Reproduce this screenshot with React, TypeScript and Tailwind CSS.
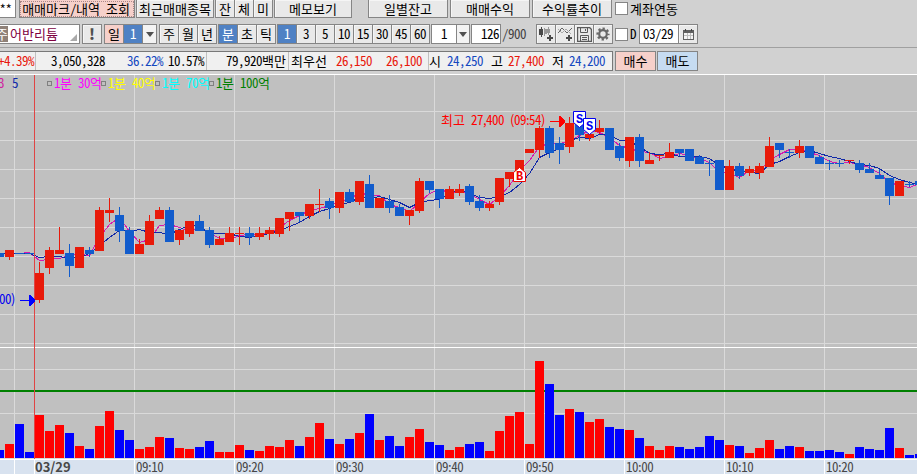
import type { ReactNode } from "react";

type Candle = [x: number, color: "r" | "b", top: number, bottom: number, high: number, low: number, volTop: number];

const candles: Candle[] = [
  [-5, "b", 253, 257, 253, 257, 450], [5, "r", 250, 257, 250, 260, 444], [15, "b", 253, 254, 253, 254, 424],
  [25, "b", 253, 254, 253, 254, 452], [35, "r", 273, 300, 262, 303, 415], [45, "r", 250, 268, 247, 274, 431],
  [55, "r", 250, 254, 227, 254, 425], [65, "b", 253, 266, 244, 277, 433], [75, "r", 247, 268, 247, 268, 446],
  [85, "b", 250, 254, 247, 257, 449], [95, "r", 210, 251, 207, 251, 426], [105, "r", 210, 213, 198, 222, 411],
  [115, "b", 215, 231, 207, 242, 430], [125, "b", 230, 254, 227, 254, 440], [135, "r", 244, 254, 239, 254, 449],
  [145, "r", 221, 245, 215, 245, 447], [155, "r", 210, 219, 207, 219, 437], [165, "b", 210, 242, 207, 242, 438],
  [175, "r", 230, 240, 230, 245, 448], [185, "r", 221, 234, 221, 237, 449], [195, "b", 221, 231, 215, 231, 447],
  [205, "b", 230, 245, 227, 248, 441], [215, "r", 239, 245, 236, 245, 452], [225, "r", 233, 242, 227, 242, 452],
  [235, "r", 233, 234, 227, 245, 445], [245, "b", 233, 237, 227, 245, 450], [255, "r", 233, 237, 227, 240, 451],
  [265, "r", 230, 234, 227, 240, 446], [275, "r", 218, 234, 218, 237, 447], [285, "r", 212, 219, 212, 231, 440],
  [295, "b", 212, 216, 212, 222, 446], [305, "r", 204, 216, 204, 219, 437], [315, "r", 204, 205, 189, 212, 423],
  [325, "b", 201, 208, 198, 219, 439], [335, "r", 192, 208, 192, 213, 444], [345, "b", 192, 202, 189, 202, 439],
  [355, "r", 181, 202, 181, 205, 433], [365, "b", 184, 208, 175, 208, 414], [375, "r", 198, 208, 198, 208, 440],
  [385, "b", 201, 208, 195, 213, 436], [395, "b", 207, 216, 204, 216, 446], [405, "r", 210, 216, 210, 225, 437],
  [415, "r", 181, 211, 178, 213, 429], [425, "b", 181, 190, 181, 193, 442], [435, "b", 189, 199, 189, 208, 445],
  [445, "r", 189, 199, 186, 199, 450], [455, "r", 189, 193, 184, 196, 447], [465, "b", 186, 202, 184, 205, 444],
  [475, "b", 201, 208, 195, 211, 442], [485, "r", 204, 208, 201, 211, 451], [495, "r", 178, 202, 178, 205, 431],
  [505, "r", 172, 179, 172, 187, 416], [515, "r", 160, 173, 160, 173, 412], [525, "r", 149, 153, 149, 153, 444],
  [535, "r", 128, 150, 126, 158, 361], [545, "b", 128, 153, 126, 158, 384], [555, "b", 143, 150, 137, 164, 415],
  [565, "r", 123, 147, 117, 153, 409], [575, "b", 118, 135, 118, 141, 412], [585, "r", 134, 138, 134, 141, 422],
  [595, "r", 128, 132, 120, 134, 419], [605, "b", 128, 150, 128, 150, 427], [615, "b", 146, 158, 143, 161, 429],
  [625, "r", 137, 161, 137, 167, 430], [635, "b", 137, 161, 134, 167, 438], [645, "r", 160, 164, 152, 164, 446],
  [655, "r", 155, 156, 155, 161, 450], [665, "r", 152, 158, 143, 158, 446], [675, "b", 149, 153, 149, 156, 447],
  [685, "b", 149, 161, 149, 161, 449], [695, "b", 157, 164, 155, 164, 447], [705, "b", 163, 164, 160, 176, 436],
  [715, "b", 160, 190, 160, 190, 440], [725, "r", 166, 190, 160, 190, 445], [735, "b", 166, 176, 163, 179, 446],
  [745, "r", 169, 173, 166, 176, 453], [755, "r", 166, 173, 163, 179, 448], [765, "r", 146, 167, 137, 167, 440],
  [775, "b", 143, 150, 143, 158, 449], [785, "b", 152, 153, 149, 158, 446], [795, "r", 146, 153, 140, 158, 447],
  [805, "b", 146, 158, 146, 158, 451], [815, "b", 157, 164, 155, 164, 451], [825, "b", 163, 164, 160, 170, 450],
  [835, "b", 163, 164, 160, 167, 452], [845, "r", 160, 161, 160, 164, 454], [855, "b", 163, 170, 160, 173, 447],
  [865, "b", 169, 173, 163, 173, 449], [875, "b", 175, 179, 169, 179, 450], [885, "b", 178, 196, 178, 205, 428],
  [895, "r", 181, 196, 181, 196, 448], [905, "b", 184, 185, 181, 187, 455], [915, "b", 181, 185, 181, 185, 454],
];

const closes = candles.map(([, c, top, bottom]) => (c === "r" ? top : bottom - 1));

function average(period: number) {
  return candles
    .map(([x], i) => {
      let sum = 0;
      for (let k = 0; k < period; k++) sum += i - k < 0 ? 253 : closes[i - k];
      return `${x + 4.5},${Math.round(sum / period) + 0.5}`;
    })
    .join(" ");
}

const columns = [14, 134, 234, 334, 434, 524, 624, 724, 824];
const priceRows = [111, 140, 169, 198, 227, 256, 285, 314, 343, 369, 413];

/* Half-width Latin cells of 6px beside 12px Hangul cells; "narrow" gives punctuation its own width. */
function T({ children, className = "", narrow = false }: { children: string; className?: string; narrow?: boolean }) {
  const runs = children.match(narrow ? /[가-힣]+|[,:()]+|[^가-힣,:()]+/g : /[가-힣]+|[^가-힣]+/g) ?? [];
  return (
    <span className={`whitespace-pre ${className}`}>
      {runs.map((run, i) => {
        if (/[가-힣]/.test(run)) return <span key={i}>{run}</span>;
        if (narrow && /[,:()]/.test(run)) return <span key={i} className="tracking-[-0.5px]">{run}</span>;
        return <span key={i} className="tracking-[-0.5px] [font-feature-settings:'hwid']">{run}</span>;
      })}
    </span>
  );
}

function Cell({ children, className = "" }: { children?: ReactNode; className?: string }) {
  return (
    <div className={`box-border flex shrink-0 items-center justify-center border border-[#858585] ${className}`}>
      {children}
    </div>
  );
}

const face = "bg-[#e9e9e9] shadow-[inset_1px_1px_0_#f5f5f5]";

function Segments({
  items,
  active,
  className = "",
  cell = "h-5",
}: {
  items: string[];
  active?: number;
  className?: string;
  cell?: string;
}) {
  return (
    <div className={`flex shrink-0 ${className}`}>
      {items.map((item, i) => (
        <Cell key={item} className={`w-5 not-first:-ml-px ${cell} ${i === active ? "bg-[#4f81c4] text-white" : face}`}>
          <T>{item}</T>
        </Cell>
      ))}
    </div>
  );
}

function Caret() {
  return (
    <svg width="8" height="5" viewBox="0 0 8 5" className="shrink-0">
      <path d="M0 0h8L4 5z" fill="#505050" />
    </svg>
  );
}

function Check({ className = "" }: { className?: string }) {
  return <div className={`size-[13px] shrink-0 border border-[#858585] bg-white ${className}`} />;
}

function CandleIcon() {
  return (
    <svg width="16" height="16" viewBox="0 0 16 16" shapeRendering="crispEdges">
      <path d="M3 1h1v10H3zM1 3h4v6H1z" fill="#484848" />
      <path d="M6 2h1v8H6zM7 3h2v5H7zM10 1h1v8h-1zM9 3h3v4H9z" fill="#989898" />
      <path d="M11 9h2v2h2v2h-2v2h-2v-2H9v-2h2z" fill="#484848" />
    </svg>
  );
}

function TrendIcon() {
  return (
    <svg width="16" height="16" viewBox="0 0 16 16" shapeRendering="crispEdges">
      <path d="M1 7l4-5 5 5 5-5" fill="none" stroke="#666" />
      <path d="M1 3l4 4 4-4 5 5" fill="none" stroke="#aaa" />
      <path d="M11 9h2v2h2v2h-2v2h-2v-2H9v-2h2z" fill="#484848" />
    </svg>
  );
}

function SaveIcon() {
  return (
    <svg width="15" height="15" viewBox="0 0 15 15" fill="none" stroke="#5a5a5a">
      <path d="M.5.5h12l2 2v12H.5z" strokeWidth="1.4" />
      <path d="M3.5.5v5h7v-5M8.500 2v2M3.500 14v-5.500h8V14M5 10.500h5M5 12.500h5" />
    </svg>
  );
}

function GearIcon() {
  return (
    <svg width="14" height="14" viewBox="0 0 14 14" fill="none" stroke="#686868">
      <circle cx="7" cy="7" r="3.800" strokeWidth="2.200" />
      <circle cx="7" cy="7" r="5.500" strokeWidth="2.200" strokeDasharray="2.300 2.020" strokeDashoffset="1.150" />
    </svg>
  );
}

function CalendarIcon() {
  return (
    <svg width="11" height="11" viewBox="0 0 11 11" shapeRendering="crispEdges">
      <path d="M0 1h11v10H0z" fill="#606060" />
      <path d="M1 4h9v6H1z" fill="#f4f4f4" />
      <path d="M4 4h1v6H4zM7 4h1v6H7zM1 6h9v1H1z" fill="#bcbcbc" />
      <path d="M2 0h1v2H2zM8 0h1v2H8z" fill="#404040" />
    </svg>
  );
}

function MenuRow() {
  return (
    <div className="flex h-[18px] shrink-0 items-start">
      <Cell className="h-[18px] w-4 border-t-0 border-l-0 bg-white"><T className="mr-1">**</T></Cell>
      <Cell className="ml-[3px] h-[18px] w-[116px] border-t-0 bg-[#f6d0ca] outline-1 -outline-offset-2 outline-dotted outline-[#a88]">
        <T className="-ml-0.5">매매마크/내역 조회</T>
      </Cell>
      <Cell className={`ml-px h-[18px] w-[78px] border-t-0 ${face}`}><T>최근매매종목</T></Cell>
      <Segments items={["잔", "체", "미"]} cell="h-[18px] border-t-0" className="ml-px" />
      <Cell className={`ml-px h-[18px] w-[78px] border-t-0 ${face}`}><T>메모보기</T></Cell>
      <Cell className={`ml-4 h-[18px] w-20 border-t-0 ${face}`}><T>일별잔고</T></Cell>
      <Cell className={`ml-0.5 h-[18px] w-20 border-t-0 ${face}`}><T>매매수익</T></Cell>
      <Cell className={`ml-0.5 h-[18px] w-20 border-t-0 ${face}`}><T>수익률추이</T></Cell>
      <Check className="mt-0.5 ml-[3px]" />
      <T className="ml-0.5">계좌연동</T>
    </div>
  );
}

function ToolRow() {
  return (
    <div className="mt-1.5 flex h-5 shrink-0 items-center">
      <div className="relative flex h-5 w-20 shrink-0 items-center border border-l-0 border-[#858585] bg-white">
        <div className="flex h-4 w-2 shrink-0 items-center justify-end bg-[#8f8178] text-white"><T>주</T></div>
        <T className="ml-0.5 text-[#800040]">어반리튬</T>
        <svg className="absolute right-0.5 bottom-0.5" width="7" height="7"><path d="M7 0v7H0z" fill="#aaa" /></svg>
      </div>
      <Cell className={`ml-0.5 h-5 w-5 text-[15px] font-black text-[#505050] ${face}`}>!</Cell>
      <Cell className="ml-0.5 h-5 w-5 bg-[#f6d0ca]"><T>일</T></Cell>
      <Cell className="-ml-px h-5 w-5 bg-[#4f81c4] text-white"><T>1</T></Cell>
      <Cell className="-ml-px h-5 w-[15px] bg-[#f3f3f3]"><Caret /></Cell>
      <Segments items={["주", "월", "년"]} className="ml-0.5" />
      <Segments items={["분", "초", "틱"]} active={0} className="ml-px" />
      <Segments items={["1", "3", "5", "10", "15", "30", "45", "60"]} active={0} className="ml-px" />
      <Cell className="ml-px h-5 w-[26px] bg-white"><T>1</T></Cell>
      <Cell className="-ml-px h-5 w-[14px] bg-[#f3f3f3]"><Caret /></Cell>
      <Cell className="ml-px h-5 w-[30px] justify-end bg-white pr-px"><T>126</T></Cell>
      <T className="ml-px w-[34px] text-[#404040]">/900</T>
      <Cell className={`h-5 w-5 ${face}`}><CandleIcon /></Cell>
      <Cell className={`-ml-px h-5 w-5 ${face}`}><TrendIcon /></Cell>
      <Cell className={`-ml-px h-5 w-5 ${face}`}><SaveIcon /></Cell>
      <Cell className={`-ml-px h-5 w-5 ${face}`}><GearIcon /></Cell>
      <Check className="ml-0.5" />
      <T className="ml-[2px] w-[9px]">D</T>
      <Cell className="h-5 w-10 justify-start bg-white pl-[3px]"><T>03/29</T></Cell>
      <Cell className={`-ml-px h-5 w-5 ${face}`}><CalendarIcon /></Cell>
    </div>
  );
}

const red = "text-[#e8180c]";
const blue = "text-[#1448c0]";

function QuoteRow() {
  return (
    <div className="mt-[3px] flex h-5 shrink-0">
      <div className="flex h-5 w-[613px] shrink-0 items-center border border-l-0 border-[#787878] bg-[#f0f0f0]">
        <div className={`flex h-full w-9 shrink-0 justify-end border-r border-[#c0c0c0] pr-px ${red}`}><T>+4.39%</T></div>
        <div className="flex h-full w-[171px] shrink-0 border-r border-[#c0c0c0]">
          <T className="ml-[15px] w-[76px]">3,050,328</T>
          <T className={`w-[41px] ${blue}`}>36.22%</T>
          <T>10.57%</T>
        </div>
        <div className="flex h-full w-[82px] shrink-0 justify-end border-r border-[#c0c0c0] pr-0.5"><T>79,920백만</T></div>
        <div className="flex h-full w-[140px] shrink-0 border-r border-[#c0c0c0]">
          <T className="ml-0.5 w-[45px]">최우선</T>
          <T className={`w-[50px] ${red}`}>26,150</T>
          <T className={red}>26,100</T>
        </div>
        <T className="w-[18px]">시</T>
        <T className={`w-11 ${blue}`}>24,250</T>
        <T className="w-[17px]">고</T>
        <T className={`w-11 ${red}`}>27,400</T>
        <T className="w-[17px]">저</T>
        <T className={blue}>24,200</T>
      </div>
      <Cell className="ml-0.5 h-5 w-[41px] bg-[#f6d0ca]"><T>매수</T></Cell>
      <Cell className="ml-px h-5 w-[41px] bg-[#c6dcf2]"><T>매도</T></Cell>
    </div>
  );
}

function Marker({ x, y, up, letter }: { x: number; y: number; up?: boolean; letter: string }) {
  return (
    <g>
      <path
        d={up ? "M.5 5.500L6.500.5l6 5v9H.5z" : "M.5.5h12v11l-6 5-6-5z"}
        transform={`translate(${x} ${y})`}
        fill="#fff"
        stroke={up ? "#f00000" : "#0000f0"}
      />
      <text
        x={x + 6.5}
        y={y + (up ? 13 : 11.5)}
        textAnchor="middle"
        fill={up ? "#f00000" : "#0000f0"}
        className="font-['Liberation_Mono',monospace] text-[12px] font-bold"
      >
        {letter}
      </text>
    </g>
  );
}

function Chart() {
  return (
    <svg width="917" height="384" viewBox="0 75 917 384" className="absolute inset-0">
      <g shapeRendering="crispEdges">
        {columns.map((x) => <rect key={x} x={x} y="75" width="1" height="384" fill="#dadada" />)}
        {priceRows.map((y) => <rect key={y} x="0" y={y} width="917" height="1" fill="#dadada" />)}
        <rect x="0" y="347" width="917" height="1" fill="#fff" />
        <rect x="0" y="390" width="917" height="2" fill="#008000" />
        <rect x="0" y="458" width="917" height="1" fill="#d8d8d8" />
        <polyline points={average(3)} fill="none" stroke="#d818b0" />
        <polyline points={average(5)} fill="none" stroke="#1028a8" />
        {candles.map(([x, c, top, bottom, high, low, vol]) => (
          <g key={x}>
            <g fill={c === "r" ? "#e81a0a" : "#125ccc"}>
              <rect x={x + 4} y={high} width="1" height={low - high} />
              <rect x={x} y={top} width="9" height={bottom - top} />
            </g>
            <rect x={x} y={vol} width="9" height={458 - vol} fill={c === "r" ? "#f00" : "#00f"} />
          </g>
        ))}
        <rect x="34" y="75" width="1" height="384" fill="#e04444" />
        <path d="M20 300h9v-5h1l5 5v1l-5 5h-1v-5h-9z" fill="#00f" />
        <path d="M550 121h9v-5h1l5 5v1l-5 5h-1v-5h-9z" fill="#f00" />
      </g>
      <Marker x={513} y={167} up letter="B" />
      <Marker x={573} y={111} letter="S" />
      <Marker x={583} y={118} letter="S" />
    </svg>
  );
}

const legend = [
  ["1분 30억", "text-[#ff00ff]"],
  ["1분 40억", "text-[#ffff00]"],
  ["1분 70억", "text-[#00ffff]"],
  ["1분 100억", "text-[#008000]"],
];

const times = ["09:10", "09:20", "09:30", "09:40", "09:50", "10:00", "10:10", "10:20"];

export default function App() {
  return (
    <div className="flex h-[474px] w-[917px] flex-col overflow-hidden bg-[#d1d1d1] font-['Noto_Sans_CJK_KR',sans-serif] text-[13px] leading-[18px] text-black">
      <MenuRow />
      <ToolRow />
      <div className="mt-[3px] h-px shrink-0 bg-[#a0a0a0]" />
      <QuoteRow />
      <div className="mt-[3px] h-px shrink-0 bg-white" />
      <div className="relative h-[384px] shrink-0 bg-[#c0c0c0]">
        <Chart />
        <div className="relative -top-px flex h-[18px] items-center">
          <T className="w-3 -indent-0.5 text-[#d020a0]">3</T>
          <T className="w-[35px] text-[#1028a8]">5</T>
          {legend.map(([label, color]) => (
            <div key={label} className="flex w-[54px] shrink-0 items-center">
              <span className="size-[5px] shrink-0 border border-[#808080]" />
              <T className={`ml-0.5 ${color}`}>{label}</T>
            </div>
          ))}
        </div>
        <T narrow className="absolute top-[36px] left-[441px] text-[#f00]">최고 27,400 (09:54)</T>
        <T narrow className="absolute top-[215px] right-[902px] text-[#0000f0]">24,200)</T>
      </div>
      <div className="flex h-[15px] shrink-0 border-t border-white bg-[#d8e2ef] text-[#484848]">
        <div className="w-[15px] shrink-0 border-r border-white" />
        <div className="w-5 shrink-0 border-r border-white" />
        <div className="flex h-full w-[100px] shrink-0 items-center border-r border-white font-bold"><span>03/29</span></div>
        {times.map((time) => (
          <div
            key={time}
            className={`flex h-full shrink-0 items-center pl-px ${time === "10:20" ? "w-[92px]" : "border-r border-white"} ${time === "09:40" ? "w-[90px]" : time === "10:20" ? "" : "w-[100px]"}`}
          >
            <T narrow>{time}</T>
          </div>
        ))}
      </div>
    </div>
  );
}
